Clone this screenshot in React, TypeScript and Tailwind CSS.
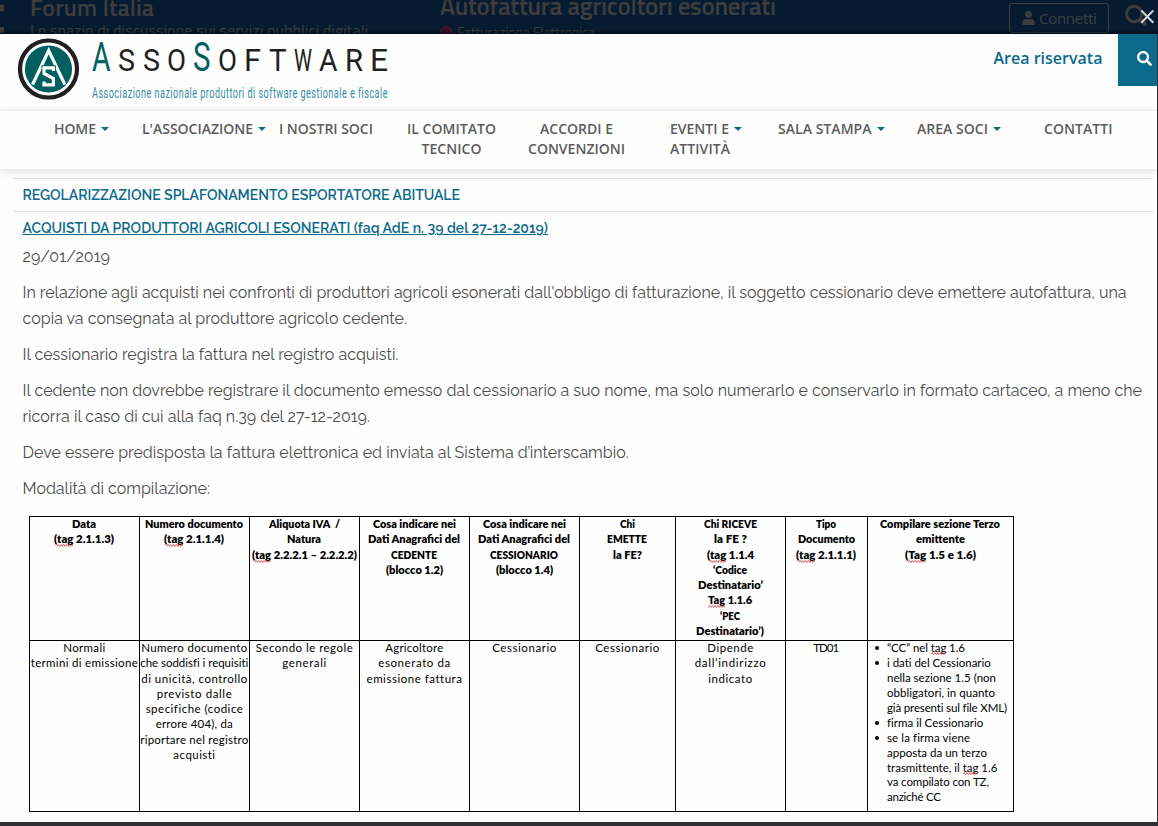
import { useLayoutEffect, useRef, type ReactNode } from "react";
import { FaSearch, FaUser } from "react-icons/fa";

/* A single line of text tracked (or condensed) to an exact width. */
function Fit({ w, squeeze = false, className = "", children }: { w: number; squeeze?: boolean; className?: string; children: ReactNode }) {
  const ref = useRef<HTMLSpanElement>(null);
  useLayoutEffect(() => {
    const el = ref.current;
    if (!el) return;
    el.style.letterSpacing = squeeze ? "" : "0px";
    el.style.marginRight = "0px";
    el.style.transform = "none";
    const natural = el.getBoundingClientRect().width;
    if (squeeze) {
      el.style.transform = `scaleX(${w / natural})`;
      el.style.marginRight = `${w - natural}px`;
    } else {
      const gap = (w - natural) / Math.max(1, (el.textContent || "").length - 1);
      el.style.letterSpacing = `${gap}px`;
      el.style.marginRight = `${-gap}px`;
    }
  }, [w, squeeze]);
  return (
    <span ref={ref} className={`inline-block origin-left whitespace-pre ${className}`}>
      {children}
    </span>
  );
}

type Line = [string, number];

/* Words wrapped in underscores carry the spell-checker's wavy line. */
function marked(text: string) {
  return text.split("_").map((part, i) =>
    i % 2 ? (
      <span key={i} className="relative">
        {part}
        <svg className="absolute bottom-[-1px] left-0 h-[3px] w-full" viewBox="0 0 18 3" preserveAspectRatio="none">
          <path d="M0 2.500 L1.500 0.500 L3 2.500 L4.500 0.500 L6 2.500 L7.500 0.500 L9 2.500 L10.500 0.500 L12 2.500 L13.500 0.500 L15 2.500 L16.500 0.500 L18 2.500" fill="none" stroke="#d0343c" strokeWidth="0.800" />
        </svg>
      </span>
    ) : (
      part
    ),
  );
}

const columns: { head: Line[]; body: Line[] }[] = [
  {
    head: [["Data", 24], ["(_tag_ 2.1.1.3)", 60]],
    body: [["Normali", 42], ["termini di emissione", 107]],
  },
  {
    head: [["Numero documento", 98], ["(_tag_ 2.1.1.4)", 60]],
    body: [
      ["Numero documento", 106],
      ["che soddisfi i requisiti", 108],
      ["di unicità, controllo", 106],
      ["previsto dalle", 75],
      ["specifiche (codice", 97],
      ["errore 404), da", 77],
      ["riportare nel registro", 108],
      ["acquisti", 42],
    ],
  },
  {
    head: [["Aliquota IVA  /", 71], ["Natura", 34], ["(_tag_ 2.2.2.1 – 2.2.2.2)", 105]],
    body: [["Secondo le regole", 97], ["generali", 44]],
  },
  {
    head: [["Cosa indicare nei", 83], ["Dati Anagrafici del", 92], ["CEDENTE", 46], ["(blocco 1.2)", 57]],
    body: [["Agricoltore", 58], ["esonerato da", 72], ["emissione fattura", 95]],
  },
  {
    head: [["Cosa indicare nei", 83], ["Dati Anagrafici del", 92], ["CESSIONARIO", 68], ["(blocco 1.4)", 57]],
    body: [["Cessionario", 64]],
  },
  {
    head: [["Chi", 15], ["EMETTE", 40], ["la FE?", 29]],
    body: [["Cessionario", 64]],
  },
  {
    head: [
      ["Chi RICEVE", 53],
      ["la FE ?", 33],
      ["(_tag_ 1.1.4", 47],
      ["‘Codice", 34],
      ["Destinatario’", 65],
      ["_Tag_ 1.1.6", 44],
      ["‘PEC", 20],
      ["Destinatario’)", 68],
    ],
    body: [["Dipende", 46], ["dall’indirizzo", 71], ["indicato", 44]],
  },
  {
    head: [["Tipo", 20], ["Documento", 57], ["(_tag_ 2.1.1.1)", 60]],
    body: [["TD01", 26]],
  },
  {
    head: [["Compilare sezione Terzo", 120], ["emittente", 49], ["(_Tag_ 1.5 e 1.6)", 71]],
    body: [],
  },
];

const notes: Line[][] = [
  [["“CC” nel _tag_ 1.6", 78]],
  [["i dati del Cessionario", 104], ["nella sezione 1.5 (non", 109], ["obbligatori, in quanto", 108], ["già presenti sul file XML)", 120]],
  [["firma il Cessionario", 96]],
  [["se la firma viene", 83], ["apposta da un terzo", 100], ["trasmittente, il _tag_ 1.6", 110], ["va compilato con TZ,", 102], ["anziché CC", 54]],
];

function Lines({ lines, squeeze = false }: { lines: Line[]; squeeze?: boolean }) {
  return (
    <>
      {lines.map(([text, w], i) => (
        <div key={i} className="flex h-[15.3px] justify-center pr-[0.5px]">
          <Fit w={w} squeeze={squeeze}>{marked(text)}</Fit>
        </div>
      ))}
    </>
  );
}

function CompilationTable() {
  return (
    <div className="ml-[29px] mt-[14px] grid h-[296px] w-[985px] grid-cols-[110px_110px_110px_110px_110px_96px_110px_82px_146px] grid-rows-[124px_171px] border-l border-t border-black font-['Lato','Open_Sans',sans-serif] text-[11.5px] leading-[13.3px] text-black">
      {columns.map((c, i) => (
        <div key={i} className="min-w-0 border-b border-r border-black text-[12px] font-extrabold">
          <Lines lines={c.head} squeeze />
        </div>
      ))}
      {columns.slice(0, 8).map((c, i) => (
        <div key={i} className="min-w-0 border-b border-r border-black">
          <Lines lines={c.body} />
        </div>
      ))}
      <ul className="min-w-0 border-b border-r border-black">
        {notes.map((lines, i) => (
          <li key={i} className="flex pl-[7px]">
            <span className="mt-[5px] mr-[8px] size-[4px] shrink-0 rounded-full bg-black" />
            <div>
              {lines.map(([text, w], j) => (
                <div key={j} className="flex h-[14.95px]">
                  <Fit w={w}>{marked(text)}</Fit>
                </div>
              ))}
            </div>
          </li>
        ))}
      </ul>
    </div>
  );
}

const menu: { lines: Line[]; caret?: boolean; centered?: boolean }[] = [
  { lines: [["HOME", 42]], caret: true },
  { lines: [["L'ASSOCIAZIONE", 111]], caret: true },
  { lines: [["I NOSTRI SOCI", 94]] },
  { lines: [["IL COMITATO", 89], ["TECNICO", 60]], centered: true },
  { lines: [["ACCORDI E", 73], ["CONVENZIONI", 97]], centered: true },
  { lines: [["EVENTI E", 59], ["ATTIVITÀ", 60]], caret: true },
  { lines: [["SALA STAMPA", 93.5]], caret: true },
  { lines: [["AREA SOCI", 71]], caret: true },
  { lines: [["CONTATTI", 68.5]] },
];

function Menu() {
  return (
    <nav className="relative z-10 grid h-[59px] grid-cols-[88px_137px_128px_121px_142px_108px_139px_127px_69px] border-t border-[#ececec] bg-[#fefefe] pl-[54px] pt-[8px] font-['Open_Sans',sans-serif] text-[14px] font-semibold leading-[20px] text-[#5c5c5c] shadow-[0_2px_8px_rgba(0,0,0,0.14)]">
      {menu.map((m, i) => (
        <div key={i} className={`flex flex-col justify-self-start ${m.centered ? "items-center" : "items-start"}`}>
          {m.lines.map(([text, w], j) => (
            <div key={j} className="flex h-[20px] items-center">
              <Fit w={w}>{text}</Fit>
              {m.caret && j === 0 && <span className="ml-[5px] border-x-[4px] border-t-[4px] border-x-transparent border-t-[#0a6a8a]" />}
            </div>
          ))}
        </div>
      ))}
    </nav>
  );
}

function Emblem() {
  const s = "M35.400 33 V29.800 H26 V35.500 L35.400 40.500 V46.800 H26 V43.600";
  return (
    <svg viewBox="0 0 62 62" className="mt-[4px] size-[62px] shrink-0">
      <circle cx="30.500" cy="31" r="28.500" fill="#fff" stroke="#231f20" strokeWidth="4.200" />
      <circle cx="30.500" cy="31" r="23.600" fill="#005f5f" />
      <path d="M14.600 46.500 L30.700 12.500 L46.800 46.500" fill="none" stroke="#fff" strokeWidth="3.200" />
      <path d={s} fill="none" stroke="#005f5f" strokeWidth="5" />
      <path d={s} fill="none" stroke="#fff" strokeWidth="3.200" />
    </svg>
  );
}

const wordmark: [string, number][] = [
  ["A", 18.5], ["S", 17], ["S", 17], ["O", 19], ["S", 17.5], ["O", 19],
  ["F", 17], ["T", 17.5], ["W", 18], ["A", 18.5], ["R", 18], ["E", 18],
];

function SiteHeader() {
  return (
    <header className="flex h-[76px] pl-[18px]">
      <Emblem />
      <div className="ml-[8.500px] w-[304px]">
        <div className="flex h-[48px] items-baseline font-['Roboto',sans-serif]">
          {wordmark.map(([ch, w], i) => (
            <span key={i} className={`flex w-[25.250px] justify-center leading-[46px] ${i === 0 || i === 4 ? "text-[41px] text-[#005f60]" : "text-[32px] text-[#231f20]"}`}>
              <Fit w={w} squeeze>{ch}</Fit>
            </span>
          ))}
        </div>
        <div className="ml-[3.500px] flex h-[20px] font-['Roboto',sans-serif] text-[15px] leading-[22px] text-[#348c9f]">
          <Fit w={296} squeeze className="tracking-[0.8px]">Associazione nazionale produttori di software gestionale e fiscale</Fit>
        </div>
      </div>
      <div className="ml-auto flex">
        <div className="mr-[15.500px] h-[48px] font-['Open_Sans',sans-serif] text-[16px] font-semibold leading-[48px] text-[#0a6a8a]">
          <Fit w={109}>Area riservata</Fit>
        </div>
        <div className="flex h-[52px] w-[39px] items-center bg-[#0a6a8a] pb-[4px] pl-[19px] text-white">
          <FaSearch size={15} />
        </div>
      </div>
    </header>
  );
}

function DimmedPage() {
  return (
    <div className="relative flex h-[34px] overflow-hidden bg-[#071b30] font-['Titillium_Web','Noto_Sans',sans-serif] text-[#3c3d3e]">
      <div className="w-[30px] shrink-0">
        <div className="mt-[5px] h-[6px] w-[4px] bg-[#3c3d3e]" />
        <div className="mt-[16px] h-[6px] w-[4px] bg-[#3c3d3e]" />
      </div>
      <div className="w-[410px] shrink-0">
        <div className="-mt-[7px] h-[28px] text-[24px] font-semibold leading-[28px]"><Fit w={124}>Forum Italia</Fit></div>
        <div className="h-[18px] text-[16px] leading-[18px]"><Fit w={338}>Lo spazio di discussione sui servizi pubblici digitali</Fit></div>
      </div>
      <div className="w-[569px] shrink-0">
        <div className="-mt-[8px] h-[28px] text-[25px] font-semibold leading-[28px]"><Fit w={336}>Autofattura agricoltori esonerati</Fit></div>
        <div className="mt-[3px] flex h-[18px] items-center text-[14px] leading-[18px]">
          <span className="mr-[5px] size-[12px] rounded-full border border-[#65142c] bg-[#35102a]" />
          <Fit w={138}>Fatturazione Elettronica</Fit>
        </div>
      </div>
      <div className="mt-[3px] flex h-[30px] w-[100px] shrink-0 items-center rounded-[3px] border border-[#3c3d3e] pl-[12px] font-['Noto_Sans',sans-serif] text-[15px]">
        <FaUser size={13} className="mr-[4px] h-[14px]" />
        <Fit w={58}>Connetti</Fit>
      </div>
      <svg viewBox="0 0 36 34" className="ml-[14px] h-[34px] w-[36px] shrink-0" fill="none">
        <circle cx="11.200" cy="14" r="7.700" stroke="#3c3d3e" strokeWidth="3" />
        <path d="M17.200 19.500 L22 24" stroke="#3c3d3e" strokeWidth="4" strokeLinecap="round" />
        <path d="M18.300 10.500 L30.300 22.800 M30.300 10.500 L18.300 22.800" stroke="#d0d4d8" strokeWidth="2" />
      </svg>
      <div className="absolute inset-x-0 bottom-0 h-[4px] bg-linear-to-b from-transparent to-black/50" />
    </div>
  );
}

const article: Line[][] = [
  [["29/01/2019", 87.5]],
  [
    ["In relazione agli acquisti nei confronti di produttori agricoli esonerati dall'obbligo di fatturazione, il soggetto cessionario deve emettere autofattura, una", 1104],
    ["copia va consegnata al produttore agricolo cedente.", 384.5],
  ],
  [["Il cessionario registra la fattura nel registro acquisti.", 376]],
  [
    ["Il cedente non dovrebbe registrare il documento emesso dal cessionario a suo nome, ma solo numerarlo e conservarlo in formato cartaceo, a meno che", 1119.5],
    ["ricorra il caso di cui alla faq n.39 del 27-12-2019.", 347.5],
  ],
  [["Deve essere predisposta la fattura elettronica ed inviata al Sistema d’interscambio.", 606]],
  [["Modalità di compilazione:", 187.5]],
];

export default function App() {
  return (
    <div className="flex h-[826px] w-[1158px] flex-col overflow-hidden bg-[#2f2f31]">
      <DimmedPage />
      <div className="h-[788px] w-[1157px] overflow-hidden bg-[#fefefe]">
        <SiteHeader />
        <Menu />
        <main className="pt-[9px] font-['Raleway','Lato',sans-serif]">
          <div className="ml-[13px] mr-[4px] text-[14px] font-semibold text-[#0a6a8a]">
            <h2 className="h-[33px] border-t border-[#dcdcdc] pl-[9.500px] leading-[33px]">
              <Fit w={437.5}>REGOLARIZZAZIONE SPLAFONAMENTO ESPORTATORE ABITUALE</Fit>
            </h2>
            <h2 className="h-[33px] border-t border-[#dcdcdc] pl-[9.500px] leading-[33px]">
              <Fit w={525.5} className="underline underline-offset-[1px]">ACQUISTI DA PRODUTTORI AGRICOLI ESONERATI (faq AdE n. 39 del 27-12-2019)</Fit>
            </h2>
          </div>
          <div className="flex flex-col gap-[10px] pl-[22.500px] text-[16px] leading-[26px] text-[#4c4c4c]">
            {article.map((lines, i) => (
              <div key={i}>
                {lines.map(([text, w], j) => (
                  <p key={j} className="flex h-[26px]"><Fit w={w}>{text}</Fit></p>
                ))}
              </div>
            ))}
          </div>
          <CompilationTable />
        </main>
      </div>
    </div>
  );
}
